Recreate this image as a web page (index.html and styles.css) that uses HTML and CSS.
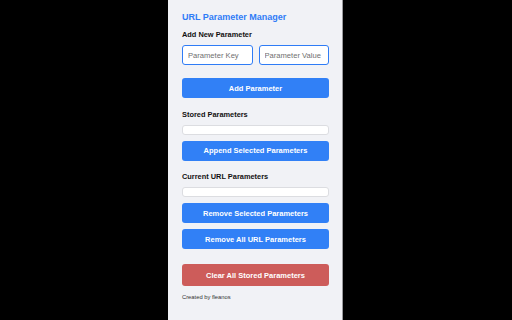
FILE: index.html
```html
<!DOCTYPE html>
<html lang="en">
<head>
  <meta charset="UTF-8" />
  <title>URL Parameter Manager</title>
  <link rel="stylesheet" href="styles.css">
</head>
<body>
  <div class="panel">
    <h1>URL Parameter Manager</h1>

    <h2>Add New Parameter</h2>
    <div class="inputs">
      <input type="text" id="key" placeholder="Parameter Key" />
      <input type="text" id="value" placeholder="Parameter Value" />
    </div>
    <button class="btn add-btn">Add Parameter</button>

    <h2 class="section">Stored Parameters</h2>
    <div class="list"></div>
    <button class="btn">Append Selected Parameters</button>

    <h2 class="section">Current URL Parameters</h2>
    <div class="list"></div>
    <button class="btn">Remove Selected Parameters</button>
    <button class="btn">Remove All URL Parameters</button>

    <button class="btn danger">Clear All Stored Parameters</button>

    <p class="credit">Created by fleanos</p>
  </div>
</body>
</html>
```

FILE: styles.css
```css
body {
  margin: 0;
  padding: 0;
  background: #000;
  font-family: "Liberation Sans", Arial, sans-serif;
  display: flex;
  justify-content: center;
  height: 320px;
  overflow: hidden;
}
.panel {
  box-sizing: border-box;
  width: 175px;
  height: 320px;
  margin-right: 1px;
  padding: 12px 13px 0 14px;
  background: #f1f2f6;
  border-right: 1px solid #9a9a9e;
  display: flex;
  flex-direction: column;
}
h1 {
  margin: 0 0 7px;
  font-size: 9px;
  line-height: 11px;
  color: #2f7cf6;
}
h2 {
  margin: 0 0 6px;
  font-size: 7.4px;
  line-height: 9px;
  color: #111;
}
.section {
  margin-top: 11.5px;
}
.inputs {
  display: flex;
  gap: 6px;
}
input {
  flex: 1;
  min-width: 0;
  height: 20px;
  box-sizing: border-box;
  padding: 0 5px;
  border: 1.5px solid #2f7cf6;
  border-radius: 3px;
  background: #fff;
  font-family: inherit;
  font-size: 7.6px;
}
input::placeholder {
  color: #6f6f6f;
}
.btn {
  height: 20px;
  margin-top: 6px;
  padding: 0;
  border: none;
  border-radius: 3px;
  background: #3180f6;
  color: #fff;
  font-family: inherit;
  font-size: 7.5px;
  font-weight: bold;
  cursor: pointer;
}
.add-btn {
  margin-top: 13px;
}
.list {
  height: 10px;
  background: #fff;
  border: 1px solid #dcdde1;
  border-radius: 3px;
  box-sizing: border-box;
}
.danger {
  height: 22px;
  margin-top: 15px;
  background: #cd5c5a;
}
.credit {
  margin: 8px 0 0;
  font-size: 5.8px;
  line-height: 7px;
  color: #333;
}
```
